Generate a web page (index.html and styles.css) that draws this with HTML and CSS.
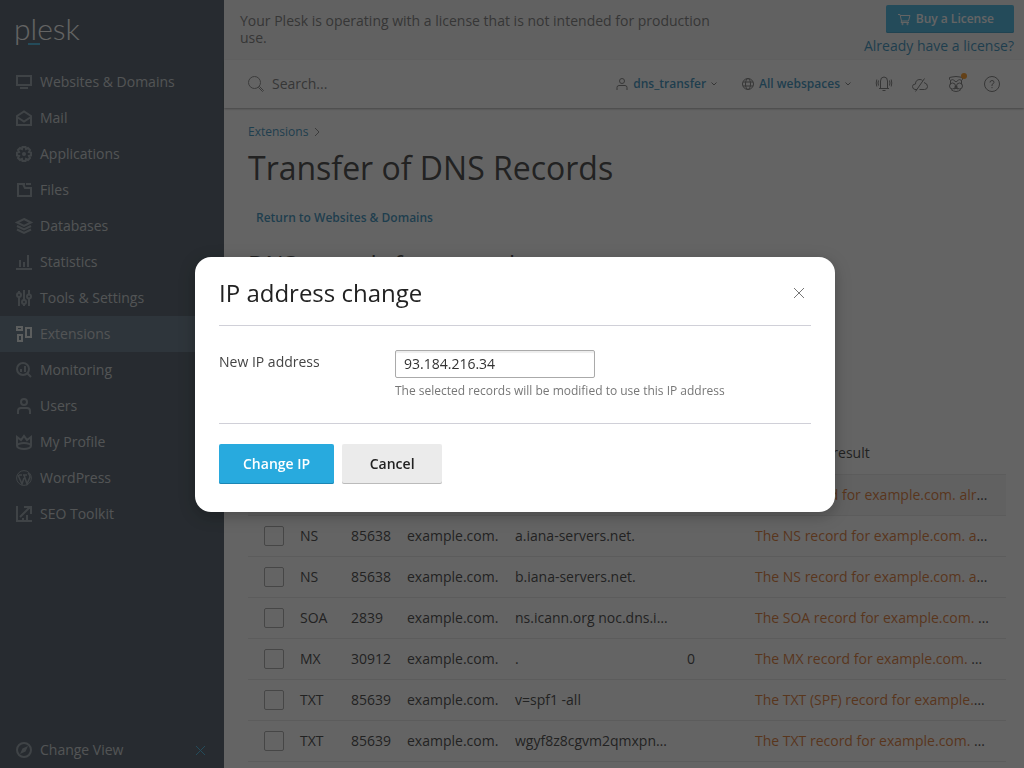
FILE: index.html
```html
<!DOCTYPE html>
<html lang="en">
<head>
    <meta charset="UTF-8">
    <meta name="viewport" content="width=device-width, initial-scale=1.0">
    <title>Transfer of DNS Records - Plesk</title>
    <link rel="stylesheet" href="styles.css">
</head>
<body>
    <div class="page">
        <nav class="sidebar">
            <a class="logo" href="#">plesk</a>
            <ul class="menu">
                <li><a class="menu-item" href="#"><svg class="icon" viewBox="0 0 16 16"><path d="M1 2h14v9H1zM4 14h8"/></svg>Websites &amp; Domains</a></li>
                <li><a class="menu-item" href="#"><svg class="icon" viewBox="0 0 16 16"><path d="M1 6l7-4.500L15 6v9H1zM1 7l7 4.500L15 7"/></svg>Mail</a></li>
                <li><a class="menu-item" href="#"><svg class="icon" viewBox="0 0 16 16"><path d="M6.500 1h3l.5 2 2-1 2 2-1 2 2 .5v3l-2 .5 1 2-2 2-2-1-.5 2h-3L6 13l-2 1-2-2 1-2-2-.5v-3L3 6 2 4l2-2 2 1z"/><circle class="solid" cx="8" cy="8" r="2"/></svg>Applications</a></li>
                <li><a class="menu-item" href="#"><svg class="icon" viewBox="0 0 16 16"><path d="M9 2H2v12h13V6H9L7 2M10 2h5"/></svg>Files</a></li>
                <li><a class="menu-item" href="#"><svg class="icon" viewBox="0 0 16 16"><path d="M8 1l7 3.500L8 8 1 4.500zM1 8l7 3.500L15 8M1 11.500L8 15l7-3.500"/></svg>Databases</a></li>
                <li><a class="menu-item" href="#"><svg class="icon" viewBox="0 0 16 16"><path d="M0 15h16M4 13V6M8 13V8M12 13V1"/></svg>Statistics</a></li>
                <li><a class="menu-item" href="#"><svg class="icon" viewBox="0 0 16 16"><path d="M3 1v2M3 7v9M8 0v10M8 14v2M13 0v4M13 9v7"/><circle cx="3" cy="5" r="2"/><circle cx="8" cy="12" r="2"/><circle cx="13" cy="6.500" r="2"/></svg>Tools &amp; Settings</a></li>
                <li><a class="menu-item active" href="#"><svg class="icon" viewBox="0 0 16 16"><path d="M1 1h5v3H1zM2 9h4v6H2zM10 2h5v9h-5z"/></svg>Extensions</a></li>
                <li><a class="menu-item" href="#"><svg class="icon" viewBox="0 0 16 16"><circle cx="7" cy="7" r="6"/><path d="M11 11l4 4M5 10V7M9 10V4"/></svg>Monitoring</a></li>
                <li><a class="menu-item" href="#"><svg class="icon" viewBox="0 0 16 16"><circle cx="8" cy="4" r="3"/><path d="M2 16v-3q0-3 3-3h6q3 0 3 3v3"/></svg>Users</a></li>
                <li><a class="menu-item" href="#"><svg class="icon" viewBox="0 0 16 16"><path d="M1 12V3l4 3 3-4 3 4 4-3v9"/><ellipse cx="8" cy="12" rx="7" ry="3"/></svg>My Profile</a></li>
                <li><a class="menu-item" href="#"><svg class="icon" viewBox="0 0 16 16"><circle class="fine" cx="8" cy="8" r="7.400"/><path class="medium" d="M2 5l4 9 2-6M3 5h3M7 5h4M8 5l3 9 3-7q0-2-2-4"/></svg>WordPress</a></li>
                <li><a class="menu-item" href="#"><svg class="icon" viewBox="0 0 16 16"><path d="M1 0v15h15M4 11l10-10M8 1h7v7M7 15v-3M11 15V9"/></svg>SEO Toolkit</a></li>
            </ul>
            <div class="change-view">
                <a class="menu-item" href="#"><svg class="icon" viewBox="0 0 16 16"><circle cx="8" cy="8" r="7"/><path class="solid" d="M12 4l-2.500 5.500L4 12l2.500-5.500z"/></svg>Change View</a>
                <button class="change-view-close" type="button" aria-label="Close"><svg class="icon thin" viewBox="0 0 16 16"><path d="M4 4l9 9M13 4l-9 9"/></svg></button>
            </div>
        </nav>

        <div class="main">
            <div class="license">
                <p class="license-text">Your Plesk is operating with a license that is not intended for production use.</p>
                <div class="license-actions">
                    <button class="buy-button" type="button"><svg class="icon thin small" viewBox="0 0 12 12"><path d="M0 1.500h2L3.500 8h7L12 2.500H2.500M3.500 8L3 9.500h8"/><circle cx="4.500" cy="11" r=".7"/><circle cx="9.500" cy="11" r=".7"/></svg>Buy a License</button>
                    <a href="#">Already have a license?</a>
                </div>
            </div>

            <header class="header">
                <label class="search">
                    <svg class="icon thin" viewBox="0 0 16 16"><circle cx="6.500" cy="6.500" r="6"/><path d="M10.500 11.500l1-1 4 4-1 1z"/></svg>
                    <input class="search-input" type="text" placeholder="Search..." aria-label="Search">
                </label>
                <button class="header-menu" type="button"><svg class="icon thin small" viewBox="0 0 12 12"><circle cx="6" cy="3" r="2.500"/><path d="M1 12V9.500q0-2 2-2h6q2 0 2 2V12"/></svg>dns_transfer<svg class="chevron" viewBox="0 0 6 4"><path d="M.5.500L3 3 5.500.500"/></svg></button>
                <button class="header-menu" type="button"><svg class="icon thin small" viewBox="0 0 12 12"><circle cx="6" cy="6" r="5.500"/><ellipse cx="6" cy="6" rx="2.500" ry="5.500"/><path d="M1 4h10M1 8h10"/></svg>All webspaces<svg class="chevron" viewBox="0 0 6 4"><path d="M.5.500L3 3 5.500.500"/></svg></button>
                <div class="header-icons">
                    <button class="icon-button" type="button" aria-label="Notifications"><svg class="icon thin" viewBox="0 0 16 16"><path d="M3 12.500h10M4.500 12.500V5q0-4 3.500-4t3.500 4v7.500M6.500 14.500h3M2.500 4.500q-1 2.500 0 5M.8 3.500q-1.200 3.500 0 7M13.500 4.500q1 2.500 0 5M15.200 3.500q1.200 3.500 0 7"/></svg></button>
                    <button class="icon-button" type="button" aria-label="Cloud"><svg class="icon thin" viewBox="0 0 16 16"><path d="M5 13.500H3Q.5 13 .5 10.500T3.500 8q0-4.500 4.500-4.500 1.500 0 2.500 1M12 6.500q3.500 1 3.500 4t-3 3H7.500M3.500 15.500l9-13"/></svg></button>
                    <button class="icon-button" type="button" aria-label="Advisor"><svg class="icon thin" viewBox="0 0 16 16"><path d="M2.500 4.500Q1 3.500 1.500 1.500L4 1q4-1 8 0l2.500.5q.5 2-1 3M2.500 4.500Q4.500 3 5.500 4L8 6l2.500-2q1-1 3 .5M2.500 4.500v4M13.500 4.500v4M6 13q2-1.500 4 0M3 13.500q5 4 10 0M7 10.500h2L8 12z"/><circle cx="4.500" cy="10" r="3"/><circle cx="11.500" cy="10" r="3"/></svg><span class="dot"></span></button>
                    <button class="icon-button" type="button" aria-label="Help"><svg class="icon thin" viewBox="0 0 16 16"><circle cx="8" cy="8" r="7.500"/><path d="M6 6.500Q6 4.500 8 4.500t2 1.800Q10 7.500 8 8.500V10M8 11v1.200"/></svg></button>
                </div>
            </header>

            <main class="content">
                <div class="breadcrumb"><a href="#">Extensions</a><svg class="breadcrumb-arrow" viewBox="0 0 6 10"><path d="M1 1l4 4-4 4"/></svg></div>
                <h1>Transfer of DNS Records</h1>
                <a class="return-link" href="#">Return to Websites &amp; Domains</a>
                <h2>DNS records for example.com</h2>

                <table class="records">
                    <colgroup>
                        <col class="col-check">
                        <col class="col-type">
                        <col class="col-ttl">
                        <col class="col-host">
                        <col class="col-value">
                        <col class="col-opt">
                        <col>
                    </colgroup>
                    <thead>
                        <tr><th><input type="checkbox" aria-label="Select all"></th><th>Type</th><th>TTL</th><th>Host</th><th>Value</th><th>Opt</th><th>Verification result</th></tr>
                    </thead>
                    <tbody>
                        <tr class="selected"><td><input type="checkbox" aria-label="Select record" checked></td><td>A</td><td>85638</td><td>example.com.</td><td>93.184.216.34</td><td></td><td><span class="warning">The A record for example.com. already exists</span></td></tr>
                        <tr><td><input type="checkbox" aria-label="Select record"></td><td>NS</td><td>85638</td><td>example.com.</td><td>a.iana-servers.net.</td><td></td><td><span class="warning">The NS record for example.com. already exists</span></td></tr>
                        <tr><td><input type="checkbox" aria-label="Select record"></td><td>NS</td><td>85638</td><td>example.com.</td><td>b.iana-servers.net.</td><td></td><td><span class="warning">The NS record for example.com. already exists</span></td></tr>
                        <tr><td><input type="checkbox" aria-label="Select record"></td><td>SOA</td><td>2839</td><td>example.com.</td><td>ns.icann.org noc.dns.icann.org</td><td></td><td><span class="warning">The SOA record for example.com. already exists</span></td></tr>
                        <tr><td><input type="checkbox" aria-label="Select record"></td><td>MX</td><td>30912</td><td>example.com.</td><td>.</td><td>0</td><td><span class="warning">The MX record for example.com. already exists</span></td></tr>
                        <tr><td><input type="checkbox" aria-label="Select record"></td><td>TXT</td><td>85639</td><td>example.com.</td><td>v=spf1 -all</td><td></td><td><span class="warning">The TXT (SPF) record for example.com. already exists</span></td></tr>
                        <tr><td><input type="checkbox" aria-label="Select record"></td><td>TXT</td><td>85639</td><td>example.com.</td><td>wgyf8z8cgvm2qmxpnbnldrcltvk4xqfn</td><td></td><td><span class="warning">The TXT record for example.com. already exists</span></td></tr>
                    </tbody>
                </table>
            </main>
        </div>
    </div>

    <div class="overlay">
        <form class="modal" role="dialog" aria-labelledby="modal-title">
            <div class="modal-header">
                <h2 class="modal-title" id="modal-title">IP address change</h2>
                <button class="modal-close" type="button" aria-label="Close"><svg class="icon thin" viewBox="0 0 16 16"><path d="M3 3l10 10M13 3L3 13"/></svg></button>
            </div>
            <div class="form-row">
                <label class="form-label" for="new-ip">New IP address</label>
                <div class="form-field">
                    <input class="form-input" type="text" id="new-ip" value="93.184.216.34">
                    <div class="form-hint">The selected records will be modified to use this IP address</div>
                </div>
            </div>
            <div class="modal-buttons">
                <button class="button button-primary" type="submit">Change IP</button>
                <button class="button" type="button">Cancel</button>
            </div>
        </form>
    </div>
</body>
</html>
```
FILE: styles.css
```css
* {
    margin: 0;
    padding: 0;
    box-sizing: border-box;
}
body {
    font-family: "Open Sans", "Liberation Sans", sans-serif;
    font-size: 14px;
    line-height: 20px;
    color: #222;
    background: #fff;
    overflow: hidden;
}
button,
input {
    font: inherit;
    color: inherit;
    background: none;
    border: none;
}
button {
    cursor: pointer;
}
a {
    color: #1681b4;
    text-decoration: none;
}
.page {
    display: flex;
    height: 100vh;
}

/* Icons */
.icon {
    width: 16px;
    height: 16px;
    flex: none;
    display: block;
    fill: none;
    stroke: currentColor;
    stroke-width: 2;
    overflow: visible;
}
.icon.thin,
.icon .fine {
    stroke-width: 1;
}
.icon .medium {
    stroke-width: 1.5;
}
.icon.small {
    width: 12px;
    height: 12px;
}
.icon .solid {
    fill: currentColor;
    stroke: none;
}

/* Sidebar */
.sidebar {
    display: flex;
    flex-direction: column;
    flex: none;
    width: 224px;
    background: #334250;
}
.logo {
    align-self: flex-start;
    height: 64px;
    padding: 10px 14px;
    font-family: Lato, sans-serif;
    font-size: 30px;
    font-weight: 300;
    line-height: 36px;
    color: #fff;
}
.logo::after {
    content: "";
    display: block;
    width: 12px;
    height: 2px;
    margin: -3px 0 0 14px;
    background: #28aade;
}
.menu {
    list-style: none;
}
.menu-item {
    display: flex;
    align-items: center;
    gap: 8px;
    height: 36px;
    padding: 0 16px;
    color: #c3c9cd;
}
.menu-item .icon {
    color: #84909b;
}
.menu-item.active {
    background: #4c6275;
}
.menu-item.active .icon {
    color: #e5e9ec;
}
.change-view {
    display: flex;
    align-items: center;
    justify-content: space-between;
    margin-top: auto;
    padding-right: 16px;
}
.change-view-close {
    color: #28aade;
}

/* License bar */
.main {
    display: flex;
    flex-direction: column;
    flex: 1;
    min-width: 0;
}
.license {
    display: flex;
    justify-content: space-between;
    height: 60px;
    flex: none;
    padding: 5px 10px 0 16px;
    background: #f5f5f5;
}
.license-text {
    max-width: 480px;
    padding-top: 7px;
    line-height: 17px;
    color: #666;
}
.license-actions {
    display: flex;
    flex-direction: column;
    align-items: flex-end;
    gap: 3px;
}
.buy-button {
    display: flex;
    align-items: center;
    gap: 6px;
    height: 28px;
    padding: 0 20px 0 12px;
    border-radius: 2px;
    box-shadow: inset 0 -1px 0 #1b8fc0;
    background: #28aade;
    color: #fff;
    font-size: 12px;
    font-weight: 600;
}

/* Header */
.header {
    display: flex;
    align-items: center;
    gap: 25px;
    height: 48px;
    flex: none;
    padding: 0 24px;
    box-shadow: 0 1px 2px rgba(0, 0, 0, 0.4);
}
.search {
    display: flex;
    align-items: center;
    flex: 1;
    gap: 8px;
    color: #777;
}
.search-input {
    flex: 1;
    min-width: 0;
    outline: none;
}
.search-input::placeholder {
    color: #666;
}
.header-menu {
    display: flex;
    align-items: center;
    gap: 5px;
    font-size: 12px;
    font-weight: 600;
    color: #1681b4;
}
.header-menu .icon,
.chevron {
    color: #666;
}
.chevron {
    width: 6px;
    height: 4px;
    fill: none;
    stroke: currentColor;
}
.header-icons {
    display: flex;
    gap: 20px;
    color: #666;
}
.icon-button {
    position: relative;
}
.dot {
    position: absolute;
    top: -3px;
    right: -3px;
    width: 6px;
    height: 6px;
    border-radius: 50%;
    background: #ff8a00;
}

/* Content */
.content {
    padding: 14px 18px 0 24px;
}
.breadcrumb {
    display: flex;
    align-items: center;
    gap: 6px;
    font-size: 12px;
}
.breadcrumb-arrow {
    width: 6px;
    height: 10px;
    fill: none;
    stroke: #777;
}
h1 {
    margin-top: 6px;
    font-size: 32px;
    font-weight: 400;
    line-height: 40px;
}
.return-link {
    display: block;
    margin-top: 20px;
    padding: 0 8px;
    font-size: 12px;
    font-weight: 600;
}
.content h2 {
    margin-top: 20px;
    font-size: 24px;
    font-weight: 400;
    line-height: 32px;
}

/* Records table */
.records {
    width: 100%;
    margin-top: 153px;
    table-layout: fixed;
    border-collapse: collapse;
}
.col-check {
    width: 44px;
}
.col-type {
    width: 51px;
}
.col-ttl {
    width: 56px;
}
.col-host {
    width: 108px;
}
.col-value {
    width: 172px;
}
.col-opt {
    width: 68px;
}
.records th,
.records td {
    height: 41px;
    padding: 0 4px 0 8px;
    border-bottom: 1px solid #e5e5e5;
    font-weight: 400;
    text-align: left;
    white-space: nowrap;
    overflow: hidden;
    text-overflow: ellipsis;
}
.records th:first-child,
.records td:first-child {
    padding-left: 16px;
}
.records td:nth-child(5) {
    padding-right: 8px;
}
.records th:last-child,
.records td:last-child {
    padding-right: 17px;
}
.records input {
    display: block;
    width: 20px;
    height: 20px;
    appearance: none;
    border: 1px solid #999;
    border-radius: 2px;
}
.selected {
    background: #f5f5f5;
}
.warning {
    color: #d9640f;
}

/* Modal */
.overlay {
    position: fixed;
    inset: 0;
    display: flex;
    align-items: center;
    justify-content: center;
    padding-left: 6px;
    background: rgba(34, 34, 34, 0.7);
}
.modal {
    width: 100%;
    max-width: 640px;
    padding: 16px 24px 28px;
    border-radius: 16px;
    background: #fff;
    box-shadow: 0 4px 16px rgba(0, 0, 0, 0.25);
}
.modal-header {
    display: flex;
    align-items: center;
    justify-content: space-between;
    padding-bottom: 12px;
    border-bottom: 1px solid #d0d0d8;
}
.modal-title {
    font-size: 24px;
    font-weight: 400;
    line-height: 40px;
}
.modal-close {
    padding: 4px;
    color: #777;
}
.form-row {
    display: flex;
    padding: 24px 0 22px;
    border-bottom: 1px solid #d0d0d8;
}
.form-label {
    flex: none;
    width: 176px;
    padding-top: 2px;
    color: #444;
}
.form-field {
    flex: 1;
}
.form-input {
    display: block;
    width: 200px;
    height: 28px;
    padding: 0 8px;
    border: 1px solid #aaa;
    border-radius: 2px;
    box-shadow: inset 0 2px 1px rgba(0, 0, 0, 0.07);
    color: #333;
}
.form-hint {
    margin-top: 3px;
    font-size: 12px;
    color: #777;
}
.modal-buttons {
    display: flex;
    gap: 8px;
    padding-top: 20px;
}
.button {
    min-width: 100px;
    height: 40px;
    padding: 0 24px;
    border-radius: 2px;
    box-shadow: inset 0 -1px 0 #bbb;
    background: #ebebeb;
    font-weight: 600;
}
.button-primary {
    box-shadow: inset 0 -1px 0 #1b86b4;
    background: #28aade;
    color: #fff;
}
```
